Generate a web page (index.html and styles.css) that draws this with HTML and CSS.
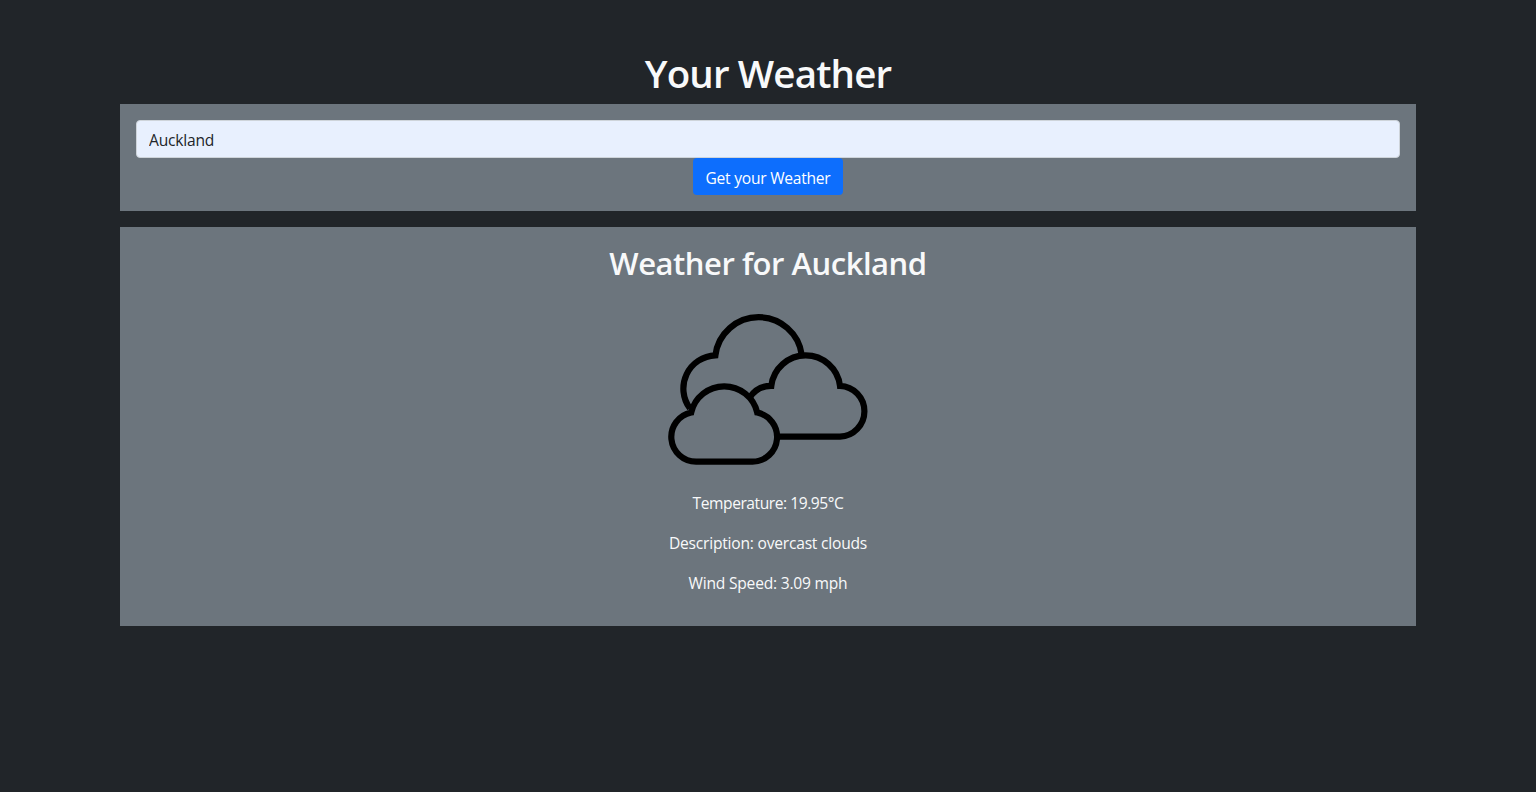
FILE: index.html
```html
<!DOCTYPE html>
<html lang="en">
<head>
<meta charset="utf-8">
<title>Your Weather</title>
<link rel="stylesheet" href="styles.css">
</head>
<body>
<main class="container">
  <h1 class="title">Your Weather</h1>
  <form class="panel search">
    <input class="city" type="text" value="Auckland" aria-label="City">
    <button class="submit" type="button">Get your Weather</button>
  </form>
  <section class="panel result">
    <h2 class="subtitle">Weather for Auckland</h2>
    <svg class="icon" viewBox="0 0 200 200" aria-hidden="true">
      <path d="M133.8 65.1 A43.55 43.55 0 0 0 47.4 65.3 A33.3 33.3 0 0 0 22 118.5"/>
      <path d="M82.3 106.8 A25.2 25.2 0 0 1 103.3 95.9 A34.6 34.6 0 0 1 172 95.9 A25.42 25.42 0 0 1 172 146.7 H109"/>
      <path d="M28.1 171.7 A24.85 24.85 0 0 1 23.2 122.5 A33.9 33.9 0 0 1 89.2 122.5 A24.85 24.85 0 0 1 84.5 171.7 Z"/>
    </svg>
    <p class="line temperature">Temperature: 19.95°C</p>
    <p class="line description">Description: overcast clouds</p>
    <p class="line wind">Wind Speed: 3.09 mph</p>
  </section>
</main>
</body>
</html>
```
FILE: styles.css
```css
* { box-sizing: border-box; }
body {
  margin: 0;
  min-height: 100vh;
  background: #212529;
  color: #f8f9fa;
  font: 400 15.6px/24px "Open Sans", "Noto Sans", sans-serif;
  text-align: center;
}
.container { width: 1296px; margin: 0 auto; padding-top: 48px; }
.title {
  margin: 0 0 8px;
  padding-top: 3px;
  font-size: 38.5px;
  font-weight: 600;
  line-height: 45px;
  letter-spacing: -0.85px;
}
.panel { padding: 16px; background: #6c757d; }
.search { display: flex; flex-direction: column; align-items: center; margin-bottom: 16px; height: 107.2px; }
.city {
  width: 100%;
  height: 37.6px;
  padding: 7px 12px 5px;
  border: 1px solid #ced4da;
  border-radius: 4px;
  background: #e8f0fe;
  color: #212529;
  font: inherit;
  letter-spacing: -0.2px;
}
.submit {
  width: 150px;
  height: 37.6px;
  padding: 3px 0 0;
  border: 0;
  border-radius: 4px;
  background: #0d6efd;
  color: #fff;
  font: inherit;
  white-space: nowrap;
  letter-spacing: -0.25px;
}
.result { height: 398.4px; }
.subtitle {
  margin: 0 0 8px;
  padding-top: 3px;
  font-size: 31px;
  font-weight: 600;
  line-height: 35.4px;
  letter-spacing: -0.48px;
}
.icon { display: block; width: 200px; height: 200px; margin: 0 auto; fill: none; stroke: #000; stroke-width: 6.2; }
.line { margin: 0 0 16px; padding-top: 2px; line-height: 22px; letter-spacing: -0.22px; }
.temperature { letter-spacing: -0.45px; }
```
